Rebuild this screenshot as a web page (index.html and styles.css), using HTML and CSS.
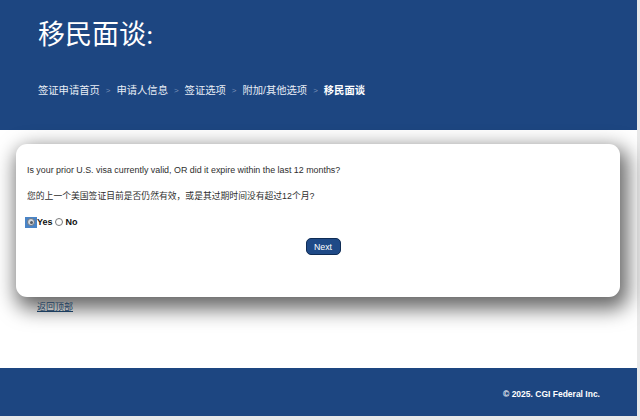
FILE: index.html
```html
<!DOCTYPE html>
<html lang="zh-CN">
<head>
<meta charset="utf-8">
<title>移民面谈</title>
<link rel="stylesheet" href="styles.css">
</head>
<body>
<div class="page">
  <header class="hdr">
    <h1 class="title">移民面谈:</h1>
    <nav class="crumbs">
      <span class="crumb">签证申请首页</span><span class="sep">&gt;</span>
      <span class="crumb">申请人信息</span><span class="sep">&gt;</span>
      <span class="crumb">签证选项</span><span class="sep">&gt;</span>
      <span class="crumb">附加/其他选项</span><span class="sep">&gt;</span>
      <span class="crumb current">移民面谈</span>
    </nav>
  </header>
  <main class="main">
    <section class="modal">
      <p class="q en">Is your prior U.S. visa currently valid, OR did it expire within the last 12 months?</p>
      <p class="q zh">您的上一个美国签证目前是否仍然有效，或是其过期时间没有超过12个月?</p>
      <div class="opts">
        <label class="opt"><span class="focus"><span class="radio checked"></span></span>Yes</label>
        <label class="opt"><span class="radio"></span>No</label>
      </div>
      <div class="actions"><button class="btn" type="button">Next</button></div>
    </section>
    <a class="toplink" href="#">返回顶部</a>
  </main>
  <footer class="ftr"><span class="copy">© 2025. CGI Federal Inc.</span></footer>
</div>
</body>
</html>
```
FILE: styles.css
```css
html {
  background: #e9e9e9;
}
body {
  margin: 0;
  font-family: "Liberation Sans", "Noto Sans CJK SC", sans-serif;
}
.page {
  width: 637px;
  background: #ffffff;
  display: flex;
  flex-direction: column;
}
.hdr {
  height: 130px;
  box-sizing: border-box;
  background: #1d4681;
  padding: 20px 0 0 38px;
  color: #ffffff;
}
.title {
  margin: 0;
  font-family: "Liberation Serif", "Noto Sans CJK SC", serif;
  font-weight: normal;
  font-size: 27px;
  line-height: 30px;
  height: 30px;
}
.crumbs {
  margin-top: 34px;
  display: flex;
  align-items: center;
  font-size: 10.3px;
  line-height: 14px;
  color: #e9eef6;
}
.sep {
  font-size: 8px;
  color: #7d93b8;
  padding: 0 6px;
}
.crumb.current {
  font-weight: bold;
  color: #ffffff;
}
.main {
  height: 238px;
  box-sizing: border-box;
  padding: 14px 17px 0 16px;
  display: flex;
  flex-direction: column;
  align-items: flex-start;
}
.modal {
  width: 604px;
  height: 153px;
  box-sizing: border-box;
  background: #ffffff;
  border-radius: 11px;
  box-shadow: 4px 8px 20px 4px rgba(0, 0, 0, 0.6);
  padding: 20px 11px 0 11px;
  color: #2e2e2e;
}
.q {
  margin: 0;
  line-height: 12px;
}
.en {
  font-size: 8.9px;
}
.zh {
  font-size: 8.8px;
  margin-top: 14px;
}
.opts {
  margin-top: 14px;
  margin-left: -2px;
  display: flex;
  align-items: center;
  font-size: 9px;
  font-weight: bold;
  color: #111111;
  line-height: 12px;
}
.opt {
  display: flex;
  align-items: center;
}
.focus {
  width: 12px;
  height: 11px;
  background: #4a84c6;
  display: flex;
  align-items: center;
  justify-content: center;
}
.radio {
  width: 6px;
  height: 6px;
  border: 1px solid #7a7a7a;
  border-radius: 50%;
  background: #ffffff;
  margin: 0 3px 0 2px;
  box-sizing: content-box;
}
.focus .radio {
  margin: 0;
  background: #d4d8de;
  border-color: #6d7580;
  position: relative;
}
.radio.checked::after {
  content: "";
  position: absolute;
  left: 1.5px;
  top: 1.5px;
  width: 3px;
  height: 3px;
  border-radius: 50%;
  background: #555b63;
}
.actions {
  margin-top: 10px;
  display: flex;
  justify-content: center;
  padding-left: 10px;
}
.btn {
  width: 35px;
  height: 17px;
  padding: 0;
  border: 1px solid #0f2c55;
  border-radius: 5px;
  background: #1f4a87;
  color: #ffffff;
  font-family: "Liberation Sans", sans-serif;
  font-size: 8.8px;
}
.toplink {
  margin-top: 5px;
  margin-left: 21px;
  font-size: 9px;
  line-height: 11px;
  color: #1c3d5e;
}
.ftr {
  height: 48px;
  background: #1d4681;
  display: flex;
  justify-content: flex-end;
  align-items: center;
  padding-right: 37px;
  box-sizing: border-box;
}
.copy {
  font-family: "Liberation Sans", sans-serif;
  font-weight: bold;
  font-size: 8.5px;
  color: #ffffff;
  padding-top: 4px;
}
```
